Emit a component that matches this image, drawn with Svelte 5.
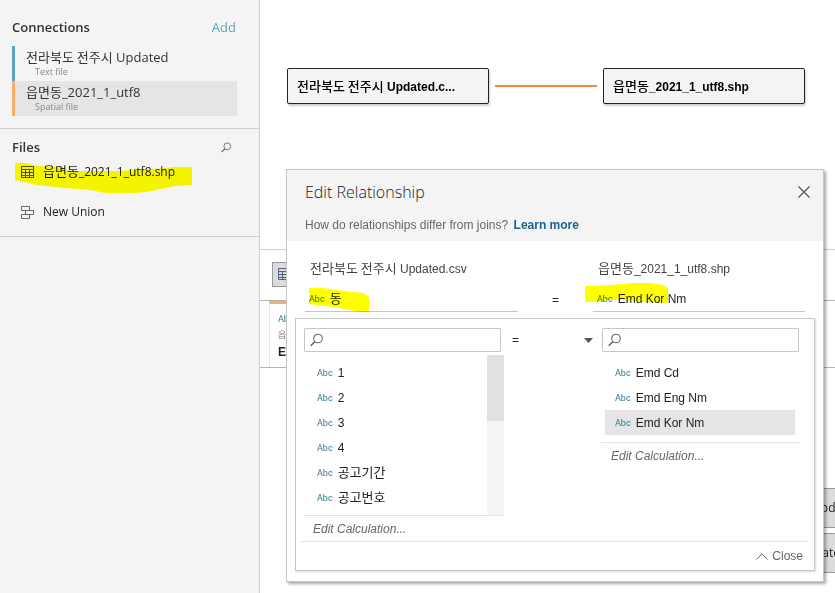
<script>
  const connections = [
    { name: '전라북도 전주시 Updated', kind: 'Text file', color: '#5fa3c5' },
    { name: '읍면동_2021_1_utf8', kind: 'Spatial file', color: '#f9ad68', selected: true }
  ];
  const leftFields = ['1', '2', '3', '4', '공고기간', '공고번호'];
  const rightFields = ['Emd Cd', 'Emd Eng Nm', 'Emd Kor Nm'];
  let chosen = $state('Emd Kor Nm');
  let leftQuery = $state('');
  let rightQuery = $state('');

  // Splits a label into Hangul and Latin runs so each can use its own size.
  const runs = (text) => text.split(/([가-힣]+(?: [가-힣]+)*)/).filter(Boolean);
  const isHangul = (run) => /[가-힣]/.test(run);
</script>

{#snippet mixed(text)}{#each runs(text) as run}<span class:ko={isHangul(run)}>{run}</span>{/each}{/snippet}

{#snippet magnifier(size)}
  <svg class="icon" width={size} height={size} viewBox="0 0 14 14" fill="none" stroke="#666" aria-hidden="true">
    <circle cx="8" cy="5.500" r="4.3" stroke-width="1.1" />
    <path d="M4.900 8.600L.7 12.800" stroke-width="1.500" />
  </svg>
{/snippet}

{#snippet gridIcon(color)}
  <svg class="icon" width="14" height="13" viewBox="0 0 14 13" fill="none" stroke={color} aria-hidden="true">
    <path d="M.5 .5h12v11H.5zM.5 3.5h12M.5 6.5h12M.5 9.5h12M4.5 3.5v8M8.5 3.5v8" />
  </svg>
{/snippet}

<div class="app">
  <aside class="sidebar">
    <section class="connections">
      <header class="side-head">
        <h2>Connections</h2>
        <a href="#add">Add</a>
      </header>
      <ul>
        {#each connections as c}
          <li class="connection" class:selected={c.selected} style:border-left-color={c.color}>
            <span class="conn-name">{@render mixed(c.name)}</span>
            <span class="conn-kind">{c.kind}</span>
          </li>
        {/each}
      </ul>
    </section>

    <section class="files">
      <header class="side-head">
        <h2>Files</h2>
        <button class="bare" aria-label="Search files">{@render magnifier(11)}</button>
      </header>
      <div class="file">
        {@render gridIcon('#555')}
        <span>{@render mixed('읍면동_2021_1_utf8.shp')}</span>
        <svg class="marker file-marker" width="178" height="31" viewBox="0 0 178 31" aria-hidden="true">
          <path fill="#ff0" d="M0 0H10L24 3L48 4V7L60 8H100L140 6L160 4H177V22L160 23L146 26L131 29L120 30H90L75 27L50 25L21 22L10 19L0 17Z" />
        </svg>
      </div>
      <div class="file union">
        <svg class="icon" width="14" height="13" viewBox="0 0 14 13" fill="none" stroke="#666" aria-hidden="true">
          <path d="M.5 .5h8v4h-8zM4.5 4.5h8v4h-8zM.5 8.5h8v4h-8z" />
        </svg>
        <span>New Union</span>
      </div>
    </section>
  </aside>

  <main>
    <section class="canvas">
      <div class="node">{@render mixed('전라북도 전주시 Updated.c...')}</div>
      <div class="link"></div>
      <div class="node">{@render mixed('읍면동_2021_1_utf8.shp')}</div>
    </section>
    <section class="toolbar">
      <button class="view" aria-label="Grid view">{@render gridIcon('#4f6280')}</button>
    </section>
    <section class="preview">
      <div class="column">
        <span class="abc">Abc</span>
        <span class="source">읍면동</span>
        <strong>Emd Cd</strong>
      </div>
    </section>
    <div class="updates">
      <button class="now">Update Now</button>
      <button>Update Automatically</button>
    </div>
  </main>

  <div class="dialog" role="dialog" aria-labelledby="dialog-title">
    <header class="dialog-head">
      <div class="title-row">
        <h1 id="dialog-title">Edit Relationship</h1>
        <button class="bare" aria-label="Close dialog">
          <svg class="icon" width="12" height="12" viewBox="0 0 12 12" stroke="#555" stroke-width="1.2" aria-hidden="true"><path d="M.5 .5l11 11M11.5 .5l-11 11" /></svg>
        </button>
      </div>
      <p>How do relationships differ from joins? <a href="#learn">Learn more</a></p>
    </header>

    <div class="pair">
      <div class="side">
        <div class="table-name">{@render mixed('전라북도 전주시 Updated.csv')}</div>
        <div class="picked">
          <span class="abc">Abc</span><span>{@render mixed('동')}</span>
          <svg class="marker left-marker" width="60" height="25" viewBox="0 0 60 25" aria-hidden="true">
            <path fill="#ff0" d="M0 0H15L20 1L35 3L54 5L60 9V24H52L40 22L25 19L0 16Z" />
          </svg>
        </div>
      </div>
      <span class="operator">=</span>
      <div class="side">
        <div class="table-name">{@render mixed('읍면동_2021_1_utf8.shp')}</div>
        <div class="picked">
          <span class="abc">Abc</span><span>Emd Kor Nm</span>
          <svg class="marker right-marker" width="83" height="20" viewBox="0 0 83 20" aria-hidden="true">
            <path fill="#ff0" d="M0 3H10L38 1L48 0H66L78 2L83 5V20L60 19L40 17H20L18 19H0Z" />
          </svg>
        </div>
      </div>
    </div>

    <div class="picker">
      <div class="choices">
        <div class="choice">
          <label class="search">{@render magnifier(14)}<input type="text" aria-label="Search left fields" bind:value={leftQuery} /></label>
          <div class="scroller">
            <ul>
              {#each leftFields as f}
                <li><button class="field"><span class="abc">Abc</span><span>{@render mixed(f)}</span></button></li>
              {/each}
            </ul>
            <div class="track"><div class="thumb"></div></div>
          </div>
          <button class="calc">Edit Calculation...</button>
        </div>
        <button class="compare" aria-label="Comparison operator">
          <span>=</span>
          <svg class="icon" width="9" height="5" viewBox="0 0 9 5" aria-hidden="true"><path fill="#555" d="M0 0h9L4.5 5z" /></svg>
        </button>
        <div class="choice">
          <label class="search">{@render magnifier(14)}<input type="text" aria-label="Search right fields" bind:value={rightQuery} /></label>
          <ul class="short">
            {#each rightFields as f}
              <li><button class="field" class:chosen={chosen === f} onclick={() => (chosen = f)}><span class="abc">Abc</span><span>{f}</span></button></li>
            {/each}
          </ul>
          <button class="calc">Edit Calculation...</button>
        </div>
      </div>
      <footer>
        <button class="bare close">
          <svg class="icon" width="12" height="7" viewBox="0 0 12 7" fill="none" stroke="#666" aria-hidden="true"><path d="M.5 6.5L6 .8l5.500 5.700" /></svg>
          <span>Close</span>
        </button>
      </footer>
    </div>
  </div>
</div>

<style>
  :global(body) { background: #fff; }
  .app {
    position: relative;
    display: flex;
    min-height: 100vh;
    overflow: hidden;
    font: 12px/16px 'Liberation Sans', 'Noto Sans CJK KR', sans-serif;
    color: #222;
  }
  .app *, .app { box-sizing: border-box; }
  h1, h2, p, ul { margin: 0; padding: 0; }
  ul { list-style: none; }
  a { text-decoration: none; }
  button { font: inherit; color: inherit; cursor: pointer; }
  .bare { display: flex; align-items: center; padding: 0; border: 0; background: none; }
  .icon { display: block; flex: none; }
  .ko { font-family: 'Noto Sans CJK KR', sans-serif; font-size: 13px; line-height: 1; }
  .abc { font: 400 9px/16px Roboto, sans-serif; color: #2f7a99; }
  .marker { position: absolute; mix-blend-mode: multiply; pointer-events: none; }

  .sidebar {
    flex: none;
    width: 260px;
    border-right: 1px solid #cfcfcf;
    background: #f4f4f4;
    font-family: 'Open Sans', 'Noto Sans CJK KR', sans-serif;
  }
  .sidebar section { border-bottom: 1px solid #cfcfcf; }
  .side-head { display: flex; align-items: center; justify-content: space-between; height: 20px; }
  h2 { font-size: 13px; line-height: 20px; font-weight: 600; color: #333; }
  .side-head a { font-size: 13px; color: #5fa3c5; }
  .connections { padding: 17px 22px 12px 12px; }
  .connections ul { margin-top: 9px; }
  .connections .side-head { padding-right: 1px; }
  .connection { display: flex; flex-direction: column; height: 35px; padding: 3px 0 0 11px; border-left: 3px solid; }
  .connection.selected { background: #e5e5e5; }
  .conn-name { font-size: 13px; line-height: 16px; color: #333; }
  .conn-kind { padding-left: 9px; font-size: 9px; line-height: 14px; color: #888; }
  .files { padding: 8px 27px 14px 12px; }
  .file { position: relative; display: flex; align-items: center; gap: 8px; height: 20px; margin-top: 5px; padding-left: 9px; }
  .union { margin-top: 20px; }
  .file-marker { left: 3px; top: 1px; }

  main { flex: 1; min-width: 0; overflow: hidden; }
  .canvas { display: flex; align-items: flex-start; gap: 6px; height: 250px; padding: 68px 30px 0 27px; border-bottom: 1px solid #cfcfcf; }
  .node {
    flex: none;
    width: 202px;
    padding: 9px 9px 7px;
    border: 1px solid #222;
    border-radius: 2px;
    background: #f4f4f4;
    box-shadow: 1px 2px 2px rgba(0, 0, 0, 0.2);
    font-weight: 700;
    line-height: 18px;
    white-space: nowrap;
    color: #000;
  }
  .node .ko { font-weight: 500; }
  .link { flex: 1; height: 2px; margin-top: 17px; background: #e98b46; }
  .toolbar { height: 51px; padding: 12px; border-bottom: 1px solid #b5b5b5; }
  .view { display: flex; align-items: center; height: 25px; padding: 0 5px; border: 1px solid #999; background: #dcdcdc; }
  .preview { height: 67px; padding-left: 9px; border-bottom: 1px solid #b5b5b5; }
  .column { display: flex; flex-direction: column; width: 120px; height: 66px; padding: 7px 8px; border-left: 1px solid #e5e5e5; border-top: 3px solid #f9ad68; }
  .source { font-size: 9px; color: #777; }
  .column strong { line-height: 18px; }
  .updates { display: flex; flex-direction: column; gap: 5px; width: 200px; margin: 120px 0 0 499px; }
  .updates button { height: 40px; padding: 0; border: 1px solid #999; background: #dcdcdc; white-space: nowrap; font-family: 'Open Sans', sans-serif; }
  .updates .now { padding-right: 24px; }

  .dialog {
    position: absolute;
    top: 169px;
    right: 11px;
    width: 538px;
    padding-bottom: 10px;
    border: 1px solid #c6c6c6;
    background: #fff;
    box-shadow: 2px 2px 3px rgba(0, 0, 0, 0.35);
  }
  .dialog-head { height: 71px; padding: 12px 13px 0 18px; background: #f4f4f4; }
  .title-row { display: flex; align-items: center; justify-content: space-between; height: 20px; }
  h1 { font: 400 16px/20px Roboto, sans-serif; font-family: 'Open Sans', sans-serif; font-weight: 300; color: #222; }
  .dialog-head p { margin-top: 15px; color: #666; }
  .dialog-head a { margin-left: 2px; font-weight: 700; color: #1b6496; }
  .pair { display: flex; padding: 18px 18px 0; }
  .side { flex: 0 0 213px; }
  .side:last-child { flex-basis: 212px; }
  .table-name { height: 20px; padding-left: 5px; line-height: 20px; color: #444; }
  .picked { position: relative; display: flex; align-items: center; gap: 5px; height: 33px; padding: 8px 0 0 4px; border-bottom: 1px solid #c6c6c6; }
  .left-marker { left: 4px; top: 9px; }
  .right-marker { left: -8px; top: 4px; }
  .operator { flex: 1; padding-top: 33px; text-align: center; }

  .picker { margin: 6px 8px 0; padding: 9px 5px 0; border: 1px solid #c6c6c6; box-shadow: 1px 1px 2px rgba(0, 0, 0, 0.15); }
  .choices { display: flex; padding: 0 8px 0 2px; }
  .choice { flex: 0 0 201px; }
  .choice:last-child { flex: 1; }
  .search { display: flex; align-items: center; height: 24px; width: 197px; margin-left: 1px; padding-left: 5px; border: 1px solid #c6c6c6; border-radius: 1px; }
  .search input { flex: 1; min-width: 0; margin-left: 4px; padding: 0; border: 0; outline: 0; background: none; font: inherit; }
  .scroller { display: flex; justify-content: space-between; height: 161px; margin-top: 3px; border-bottom: 1px solid #e3e3e3; }
  .scroller ul { flex: 1; padding: 5px 0 0 4px; }
  .short { padding: 8px 6px 7px 4px; border-bottom: 1px solid #e3e3e3; }
  .field { display: flex; align-items: center; gap: 5px; width: 100%; height: 25px; padding: 0 10px; border: 0; background: none; text-align: left; }
  .field.chosen { background: #e5e5e5; }
  .track { width: 17px; background: #f4f4f4; }
  .thumb { height: 66px; background: #e1e1e1; }
  .calc { display: block; height: 25px; padding: 0 10px; border: 0; background: none; font-style: italic; color: #666; }
  .compare { display: flex; align-items: center; justify-content: space-between; flex: 0 0 97px; height: 24px; padding: 0 8px; border: 0; background: none; }
  footer { display: flex; justify-content: flex-end; height: 29px; padding-right: 6px; border-top: 1px solid #e3e3e3; }
  .close { gap: 4px; color: #666; }
</style>
